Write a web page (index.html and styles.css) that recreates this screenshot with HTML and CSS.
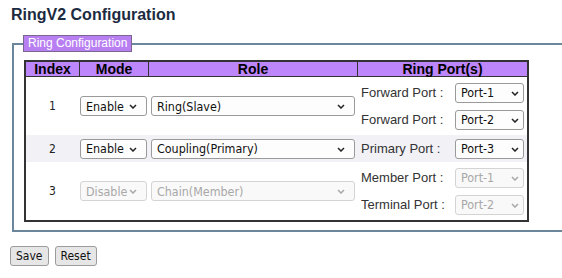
FILE: index.html
```html
<!DOCTYPE html>
<html>
<head>
<meta charset="utf-8">
<link rel="stylesheet" href="styles.css">
</head>
<body>
<h1 class="title">RingV2 Configuration</h1>
<fieldset class="group">
  <legend class="group-legend">Ring Configuration</legend>
  <table class="ring-table">
    <thead>
      <tr>
        <th class="c-index">Index</th>
        <th class="c-mode">Mode</th>
        <th class="c-role">Role</th>
        <th class="c-ports">Ring Port(s)</th>
      </tr>
    </thead>
    <tbody>
      <tr>
        <td class="idx">1</td>
        <td class="mode"><span class="sel-wrap w-mode"><select class="sel"><option>Enable</option><option>Disable</option></select><svg class="chev" viewBox="0 0 8 5"><path d="M1 1 L4 4 L7 1"/></svg></span></td>
        <td class="role"><span class="sel-wrap w-role"><select class="sel"><option>Ring(Slave)</option></select><svg class="chev" viewBox="0 0 8 5"><path d="M1 1 L4 4 L7 1"/></svg></span></td>
        <td class="ports multi">
          <div class="port-line"><span class="port-label">Forward Port :</span><span class="sel-wrap w-port"><select class="sel"><option>Port-1</option></select><svg class="chev" viewBox="0 0 8 5"><path d="M1 1 L4 4 L7 1"/></svg></span></div>
          <div class="port-line"><span class="port-label">Forward Port :</span><span class="sel-wrap w-port"><select class="sel"><option>Port-2</option></select><svg class="chev" viewBox="0 0 8 5"><path d="M1 1 L4 4 L7 1"/></svg></span></div>
        </td>
      </tr>
      <tr class="alt">
        <td class="idx">2</td>
        <td class="mode"><span class="sel-wrap w-mode"><select class="sel"><option>Enable</option><option>Disable</option></select><svg class="chev" viewBox="0 0 8 5"><path d="M1 1 L4 4 L7 1"/></svg></span></td>
        <td class="role"><span class="sel-wrap w-role"><select class="sel"><option>Coupling(Primary)</option></select><svg class="chev" viewBox="0 0 8 5"><path d="M1 1 L4 4 L7 1"/></svg></span></td>
        <td class="ports">
          <div class="port-line"><span class="port-label">Primary Port :</span><span class="sel-wrap w-port"><select class="sel"><option>Port-3</option></select><svg class="chev" viewBox="0 0 8 5"><path d="M1 1 L4 4 L7 1"/></svg></span></div>
        </td>
      </tr>
      <tr>
        <td class="idx">3</td>
        <td class="mode"><span class="sel-wrap w-mode is-disabled"><select class="sel" disabled><option>Disable</option></select><svg class="chev" viewBox="0 0 8 5"><path d="M1 1 L4 4 L7 1"/></svg></span></td>
        <td class="role"><span class="sel-wrap w-role is-disabled"><select class="sel" disabled><option>Chain(Member)</option></select><svg class="chev" viewBox="0 0 8 5"><path d="M1 1 L4 4 L7 1"/></svg></span></td>
        <td class="ports multi">
          <div class="port-line"><span class="port-label">Member Port :</span><span class="sel-wrap w-port is-disabled"><select class="sel" disabled><option>Port-1</option></select><svg class="chev" viewBox="0 0 8 5"><path d="M1 1 L4 4 L7 1"/></svg></span></div>
          <div class="port-line"><span class="port-label">Terminal Port :</span><span class="sel-wrap w-port is-disabled"><select class="sel" disabled><option>Port-2</option></select><svg class="chev" viewBox="0 0 8 5"><path d="M1 1 L4 4 L7 1"/></svg></span></div>
        </td>
      </tr>
    </tbody>
  </table>
</fieldset>
<div class="actions">
  <button class="btn">Save</button>
  <button class="btn">Reset</button>
</div>
</body>
</html>
```
FILE: styles.css
```css
html, body {
  margin: 0;
  padding: 0;
  background: #ffffff;
  overflow: hidden;
}
body {
  font-family: "Liberation Sans", Arial, sans-serif;
  color: #222;
}
.title {
  margin: 0;
  padding: 5px 0 0 11px;
  font-size: 16px;
  line-height: 20px;
  font-weight: bold;
  color: #1c2b3f;
}
.group {
  margin: 10px 0 0 12px;
  padding: 8px 10px 8px 10px;
  width: 528px;
  border: 2px solid #6a879c;
  border-right: none;
  min-width: 0;
}
.group-legend {
  margin-left: -1px;
  padding: 0 4px;
  font-size: 12px;
  line-height: 15px;
  color: #ffffff;
  background: #b87ff2;
  border: 1px solid #7a6690;
}
.ring-table {
  border-collapse: separate;
  border-spacing: 0;
  table-layout: fixed;
  width: 505px;
  border: 2px solid #333;
}
.ring-table th {
  box-sizing: border-box;
  padding: 0;
  height: 15px;
  font-size: 14px;
  line-height: 14px;
  font-weight: bold;
  color: #000;
  background: #bd86fb;
  border-bottom: 1px solid #333;
  border-left: 1px solid #333;
  text-align: center;
}
.ring-table th.c-index { border-left: none; width: 53px; }
.ring-table th.c-mode { width: 69px; }
.ring-table th.c-role { width: 209px; }
.ring-table th.c-ports { width: 170px; }
.ring-table td {
  padding: 0;
  vertical-align: middle;
}
.alt td {
  background: #f1f1f6;
}
.idx {
  text-align: center;
  font-family: "DejaVu Sans Condensed", "DejaVu Sans", sans-serif;
  font-size: 12px;
  color: #222;
}
.ring-table td.mode { padding-left: 1px; }
.ring-table td.role { padding-left: 3px; }
.ring-table td.ports { padding: 0 3px 0 4px; }
.ring-table td.ports.multi { padding-top: 2px; padding-bottom: 2px; }
.port-line {
  display: flex;
  align-items: center;
  justify-content: space-between;
  height: 27px;
}
.port-label {
  font-size: 13px;
  color: #333;
}
.sel-wrap {
  position: relative;
  display: block;
  height: 20px;
}
.w-mode { width: 67px; }
.w-role { width: 204px; }
.w-port { width: 69px; }
.sel {
  box-sizing: border-box;
  -webkit-appearance: none;
  appearance: none;
  width: 100%;
  height: 20px;
  font-family: "DejaVu Sans Condensed", "DejaVu Sans", sans-serif;
  font-size: 12.4px;
  color: #111;
  background: #fdfdfd;
  border: 1px solid #9a9a9a;
  border-radius: 3px;
  padding: 0 0 0 5px;
  margin: 0;
  display: block;
}
.sel:disabled {
  color: #a8a8a8;
  border-color: #d4d4d4;
  background: #f9f9f9;
  opacity: 1;
}
.chev {
  position: absolute;
  top: 8px;
  width: 8px;
  height: 5px;
  pointer-events: none;
  fill: none;
  stroke: #222;
  stroke-width: 1.5;
}
.w-mode .chev { right: 10px; }
.w-role .chev { right: 10px; }
.w-port .chev { right: 5px; }
.is-disabled .chev { stroke: #a8a8a8; }
.actions {
  display: flex;
  gap: 6px;
  margin: 14px 0 0 10px;
}
.btn {
  box-sizing: border-box;
  height: 20px;
  padding: 0 5px;
  font-family: "DejaVu Sans Condensed", "DejaVu Sans", sans-serif;
  font-size: 12px;
  color: #111;
  background: #e6e6e6;
  border: 1px solid #9c9c9c;
  border-radius: 3px;
}
```
